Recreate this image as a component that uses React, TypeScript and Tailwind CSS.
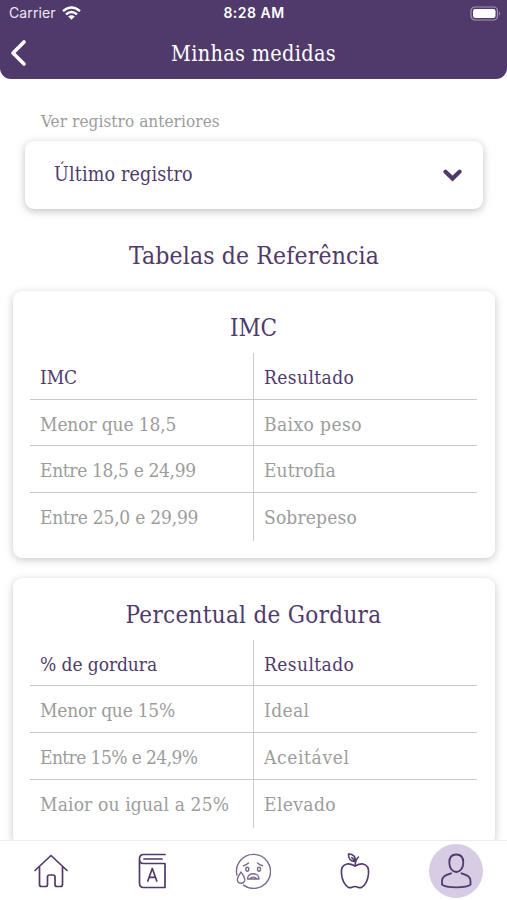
import React from 'react';

type Cell = { text: string; spacing: string };
type Row = [Cell, Cell];

const slab = "font-['Roboto_Slab','DejaVu_Serif_Condensed','DejaVu_Serif',serif]";

const bmiRows: Row[] = [
  [{ text: 'IMC', spacing: 'tracking-[-0.1px]' }, { text: 'Resultado', spacing: 'tracking-[0.42px]' }],
  [{ text: 'Menor que 18,5', spacing: 'tracking-[-0.13px]' }, { text: 'Baixo peso', spacing: 'tracking-[0.42px]' }],
  [{ text: 'Entre 18,5 e 24,99', spacing: 'tracking-[-0.35px]' }, { text: 'Eutrofia', spacing: 'tracking-[0.12px]' }],
  [{ text: 'Entre 25,0 e 29,99', spacing: 'tracking-[-0.21px]' }, { text: 'Sobrepeso', spacing: 'tracking-[0.18px]' }],
];

const fatRows: Row[] = [
  [{ text: '% de gordura', spacing: 'tracking-[-0.07px]' }, { text: 'Resultado', spacing: 'tracking-[0.42px]' }],
  [{ text: 'Menor que 15%', spacing: 'tracking-[-0.23px]' }, { text: 'Ideal', spacing: 'tracking-[0.4px]' }],
  [{ text: 'Entre 15% e 24,9%', spacing: 'tracking-[-0.58px]' }, { text: 'Aceitável', spacing: 'tracking-[0.65px]' }],
  [{ text: 'Maior ou igual a 25%', spacing: 'tracking-[0.16px]' }, { text: 'Elevado', spacing: 'tracking-[0.4px]' }],
];

function ReferenceTable({ title, rows, titleClass }: { title: string; rows: Row[]; titleClass: string }) {
  return (
    <section className="h-[267px] shrink-0 rounded-[9px] bg-white pl-[17px] pr-[18px] pt-[18px] shadow-[0_2px_8px_rgba(0,0,0,0.22)]">
      <h2 className={`h-[44px] whitespace-nowrap text-center text-[24px] leading-[38px] text-[#503a6b] ${titleClass}`}>{title}</h2>
      <div className="divide-y divide-[#c9c9c9]">
        {rows.map(([a, b], i) => (
          <div
            key={a.text}
            className={`grid h-[46.7px] grid-cols-[224px_1fr] whitespace-nowrap text-[19px] leading-[48px] ${i === 0 ? 'text-[#503a6b]' : 'text-[#9c9c9c]'}`}
          >
            <div className={`h-full border-r border-[#c9c9c9] pl-[10px] ${a.spacing}`}>{a.text}</div>
            <div className={`h-full pl-[10px] ${b.spacing}`}>{b.text}</div>
          </div>
        ))}
      </div>
    </section>
  );
}

function HomeIcon() {
  return (
    <svg width="36" height="36" viewBox="0 0 36 36" fill="none" stroke="#503a6b" strokeWidth="1.7" strokeLinecap="round" strokeLinejoin="round">
      <path d="M2 17.500L18 2.500L34 17.500" />
      <path d="M6.500 14V31.500Q6.500 33.500 8.500 33.500H12.500Q14.500 33.500 14.500 31.500V24Q14.500 22 16.500 22H20Q22 22 22 24V31.500Q22 33.500 24 33.500H27.500Q29.500 33.500 29.500 31.500V14" />
    </svg>
  );
}

function BookIcon() {
  return (
    <svg width="30" height="36" viewBox="0 0 30 36" fill="none" stroke="#503a6b" strokeWidth="1.7" strokeLinecap="round" strokeLinejoin="round">
      <path d="M28 1.500H6.500Q2.500 1.500 2.500 6V30Q2.500 34.500 6.500 34.500H28V10.500H6.500Q2.500 10.500 2.500 6" />
      <path d="M7 6H25M10.800 28L15.300 15.500L19.800 28M12.300 24.300H18.300" />
    </svg>
  );
}

function FaceIcon() {
  return (
    <svg width="36" height="36" viewBox="0 0 36 36" fill="none" stroke="#796a8d" strokeWidth="1.4" strokeLinecap="round" strokeLinejoin="round">
      <path d="M1.900 22A17 17 0 1 1 8.500 32.100" />
      <path d="M6 19C4.500 21.500 2.300 24 2.300 26.500A3.700 3.700 0 0 0 9.800 26.500C9.800 24 7.500 21.500 6 19Z" />
      <path d="M8.500 12.800Q11.500 12 13.500 10M22.500 10Q24.500 12 27.500 12.800" />
      <ellipse cx="12.300" cy="16.200" rx="1.500" ry="2" />
      <ellipse cx="24" cy="16.200" rx="1.500" ry="2" />
      <path d="M12.500 26C12.500 19 24 19 24 26ZM15 25.500Q18 22.800 21.500 25.500" />
    </svg>
  );
}

function AppleIcon() {
  return (
    <svg width="32" height="38" viewBox="0 0 32 38" fill="none" stroke="#503a6b" strokeWidth="1.600" strokeLinecap="round" strokeLinejoin="round">
      <path d="M16 14C13 12.500 10.500 11.500 8 12C3 13 2 17.500 2.500 22C3 28 6 34 9.500 35.500C12 36.300 13.500 34.500 16 34.500S20 36.300 22.500 35.500C26 34 29 28 29.500 22C30 17.500 29 13 24 12C21.500 11.500 19 12.500 16 14Z" />
      <path d="M16 14Q16.300 8 19.500 5M16.300 9.500C12 10 9 6 9.500 2C13.500 1.500 17 4.500 16.300 9.500ZM12.800 5.500L16.300 9.500" />
    </svg>
  );
}

function UserIcon() {
  return (
    <svg width="32" height="36" viewBox="0 0 32 36" fill="none" stroke="#503a6b" strokeWidth="1.800" strokeLinecap="round" strokeLinejoin="round">
      <path d="M16.300 1.500C11.800 1.500 9.300 4.500 9.300 9.500C9.300 15 12.300 19 16.300 19S23.300 15 23.300 9.500C23.300 4.500 20.800 1.500 16.300 1.500Z" />
      <path d="M11 20.300C6.500 22 2 23 2 28V31.700C6 35.300 26.500 35.300 30.500 31.700V28C30.500 23 26 22 21.500 20.300" />
    </svg>
  );
}

export default function App() {
  return (
    <div className={`flex h-[900px] w-[507px] flex-col overflow-hidden bg-white ${slab}`}>
      <header className="h-[79px] shrink-0 rounded-b-[11px] bg-[#503a6b] text-white">
        <div className="grid h-[28px] grid-cols-3 items-center font-['Inter','Liberation_Sans',sans-serif] text-[14px] leading-[20px]">
          <div className="flex items-center gap-[6px] pb-[2px] pl-[9px] text-[#eee8f4]">
            <span className="tracking-[0.1px]">Carrier</span>
            <svg width="19" height="14" viewBox="0 0 19 14" fill="none" stroke="white" strokeWidth="2.300">
              <path d="M1 5.200Q9.500-2.200 18 5.200M4 8.400Q9.500 3.500 15 8.400" />
              <path d="M6.200 10.500Q9.500 7.800 12.800 10.500L9.500 13.700Z" fill="white" stroke="none" />
            </svg>
          </div>
          <div className="whitespace-nowrap pb-[2px] pl-[1px] text-center font-semibold tracking-[0.5px]">8:28 AM</div>
          <div className="flex justify-end pb-[2px] pr-[6px]">
            <svg width="31" height="15" viewBox="0 0 31 15">
              <rect x="1" y="1" width="26.500" height="13" rx="4" fill="none" stroke="#a396b3" strokeWidth="1.200" />
              <rect x="3" y="3" width="22.500" height="9" rx="2.200" fill="white" />
              <path d="M29 5.500Q31 7.500 29 9.500Z" fill="#a396b3" />
            </svg>
          </div>
        </div>
        <div className="grid h-[49px] grid-cols-[60px_1fr_60px] items-center">
          <svg className="ml-[9px]" width="20" height="28" viewBox="0 0 20 28" fill="none" stroke="white" strokeWidth="3.600" strokeLinecap="round" strokeLinejoin="round">
            <path d="M15 3L4 14L15 25" />
          </svg>
          <h1 className="whitespace-nowrap pt-[2px] text-center text-[21.5px] leading-[32px] tracking-[0.3px]">Minhas medidas</h1>
        </div>
      </header>

      <main className="flex min-h-0 flex-1 flex-col overflow-hidden pl-[13px] pr-[12px]">
        <label className="mt-[29px] h-[33px] shrink-0 whitespace-nowrap pl-[28px] text-[17px] leading-[26px] tracking-[0.08px] text-[#9c9c9c]">Ver registro anteriores</label>
        <button className="ml-[12px] mr-[12px] flex h-[68px] shrink-0 items-center justify-between rounded-[9px] bg-white pl-[29px] pr-[21px] text-[19.5px] tracking-[0.16px] text-[#503a6b] shadow-[0_2px_8px_rgba(0,0,0,0.25)]">
          <span className="whitespace-nowrap">Último registro</span>
          <svg width="19" height="13" viewBox="0 0 19 13" fill="none" stroke="#503a6b" strokeWidth="4.200" strokeLinecap="round">
            <path d="M2.500 2.800L9.500 9.500L16.500 2.800" />
          </svg>
        </button>
        <h2 className="mt-[29px] h-[53px] shrink-0 whitespace-nowrap text-center text-[24.5px] leading-[36px] tracking-[0.15px] text-[#503a6b]">Tabelas de Referência</h2>
        <div className="flex flex-col gap-[19.5px]">
          <ReferenceTable title="IMC" titleClass="tracking-[0px]" rows={bmiRows} />
          <ReferenceTable title="Percentual de Gordura" titleClass="tracking-[0.3px]" rows={fatRows} />
        </div>
      </main>

      <nav className="grid h-[60px] shrink-0 grid-cols-5 place-items-center border-t border-[#ededed] bg-white">
        <HomeIcon />
        <BookIcon />
        <FaceIcon />
        <AppleIcon />
        <div className="grid h-[54px] w-[54px] place-items-center rounded-full bg-[#d6cce3]">
          <UserIcon />
        </div>
      </nav>
    </div>
  );
}
